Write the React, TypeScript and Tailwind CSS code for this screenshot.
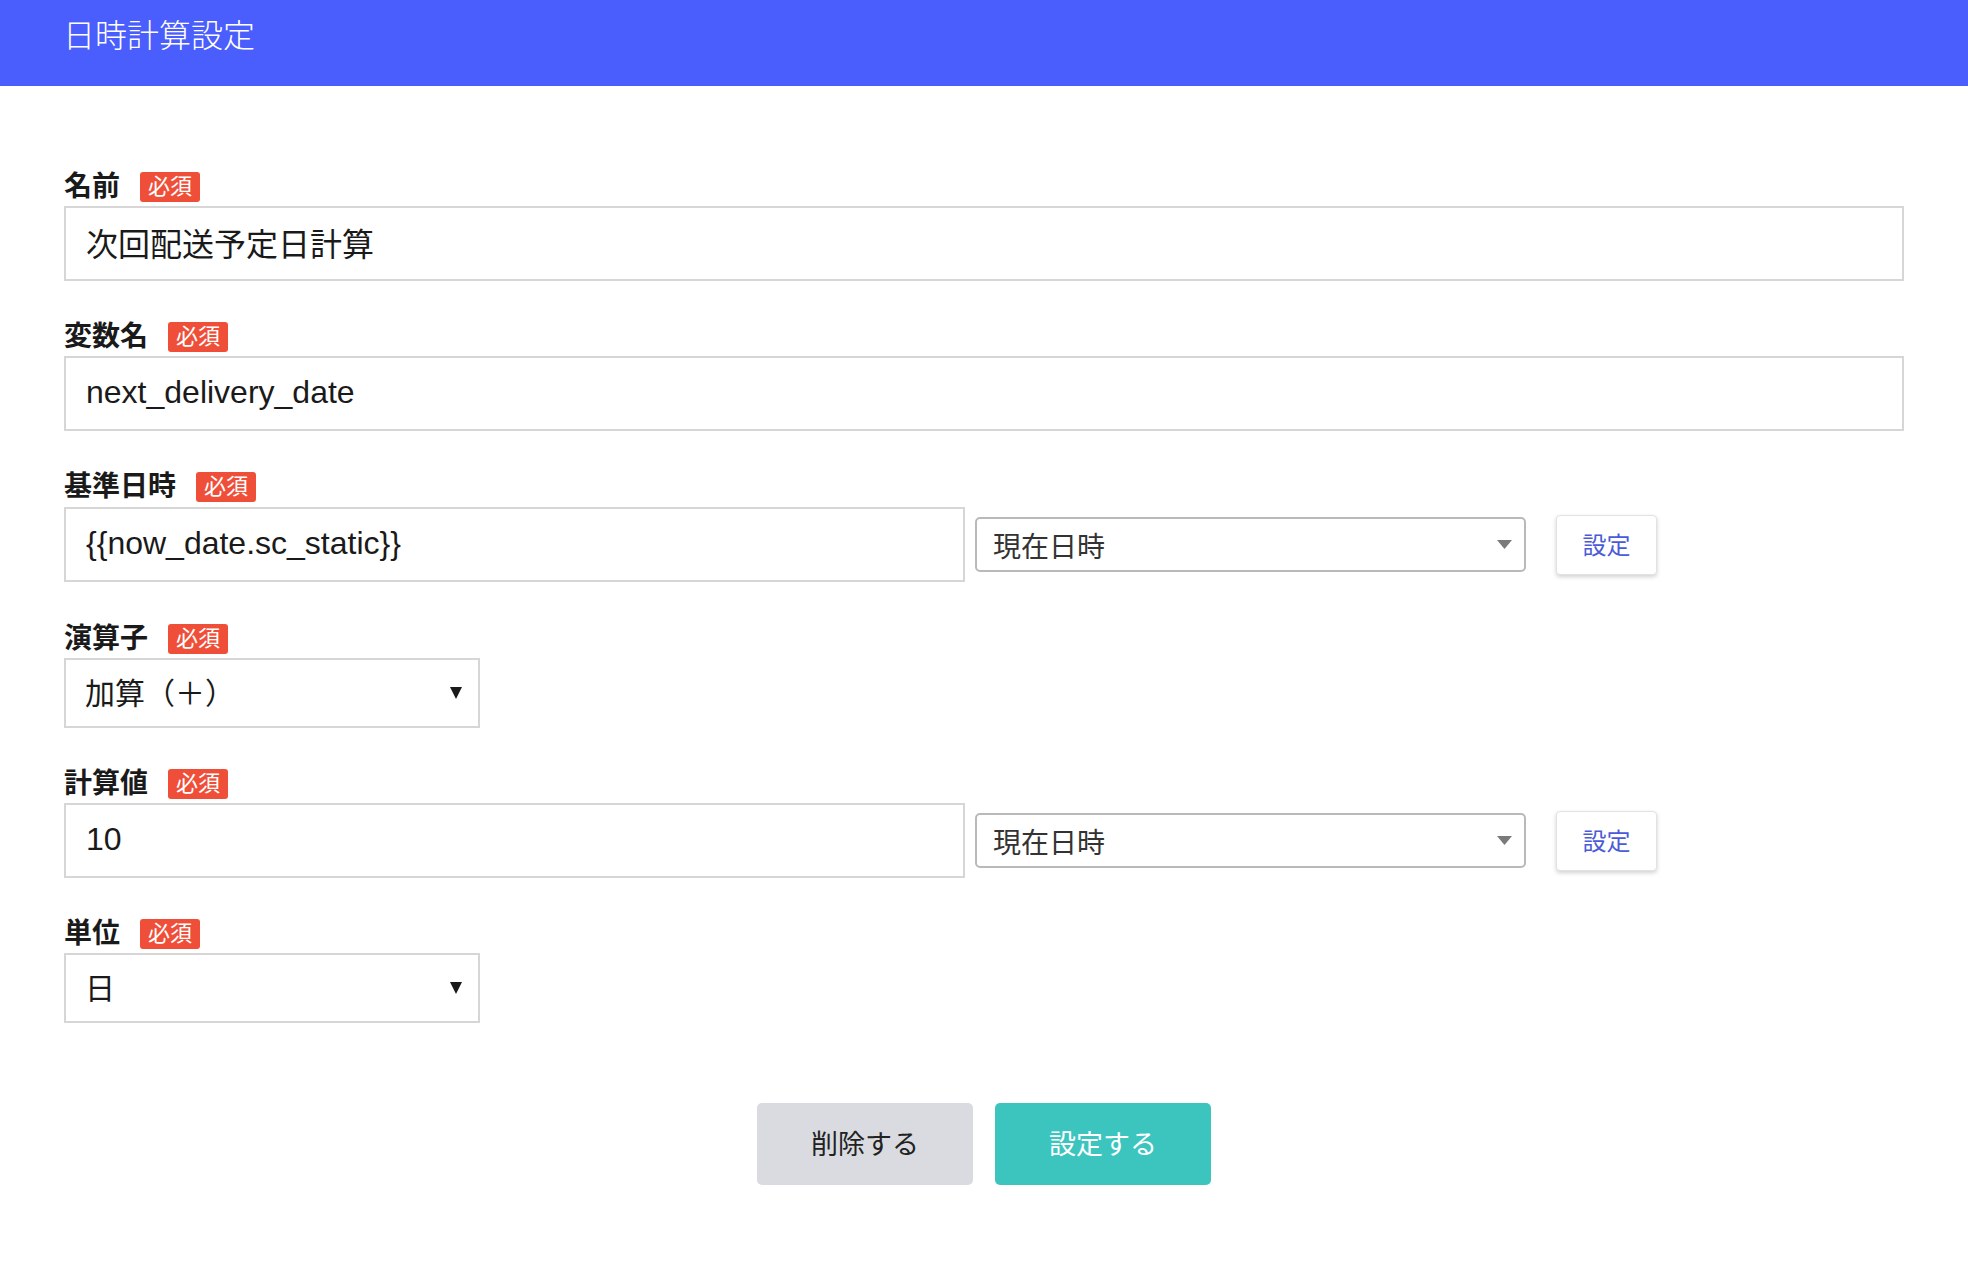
import React from 'react';

const FONT = "font-['Liberation_Sans','Noto_Sans_CJK_JP',sans-serif]";

function FieldLabel({ text }: { text: string }) {
  return (
    <div className="flex h-[30px] items-center gap-[20px]">
      <span className="text-[28px] font-bold leading-[30px] text-[#1a1a1a]">{text}</span>
      <span className="flex h-[30px] items-center rounded-[3px] bg-[#ef4f39] px-[8px] text-[22px] leading-none text-white">
        必須
      </span>
    </div>
  );
}

function TextBox({ value, wide }: { value: string; wide?: boolean }) {
  return (
    <input
      readOnly
      value={value}
      className={`h-[75px] border-2 border-[#d6d6d6] bg-white pb-[3px] pl-[20px] text-[32px] text-[#1a1a1a] outline-none ${
        wide ? 'w-full' : 'w-[901px]'
      }`}
    />
  );
}

function SourceSelect() {
  return (
    <>
      <div className="ml-[10px] flex h-[55px] w-[551px] items-center justify-between rounded-[5px] border-2 border-[#b9b9b9] bg-white pl-[16px] pr-[12px]">
        <span className="pt-[6px] text-[28px] text-[#333]">現在日時</span>
        <svg width="15" height="9" viewBox="0 0 15 9">
          <polygon points="0,0 15,0 7.5,9" fill="#7a7a7a" />
        </svg>
      </div>
      <button className="ml-[30px] flex h-[60px] w-[101px] items-center justify-center rounded-[4px] border border-[#e2e2e2] bg-white pt-[2px] text-[24px] text-[#4a5ad8] shadow-[0_2px_4px_rgba(0,0,0,0.18)]">
        設定
      </button>
    </>
  );
}

function PlainSelect({ value }: { value: string }) {
  return (
    <div className="flex h-[70px] w-[416px] items-center justify-between border-2 border-[#d6d6d6] bg-white pl-[19px] pr-[16px]">
      <span className="text-[30px] text-[#1a1a1a]">{value}</span>
      <svg width="12" height="12" viewBox="0 0 12 12">
        <polygon points="0,0 12,0 6,12" fill="#1a1a1a" />
      </svg>
    </div>
  );
}

export default function App() {
  return (
    <div className={`min-h-screen bg-white ${FONT}`}>
      {/* Header */}
      <header className="h-[86px] bg-[#4a5dfd] pl-[63px] pt-[16px]">
        <h1 className="text-[32px] font-light leading-[40px] text-white">日時計算設定</h1>
      </header>

      <main className="px-[64px] pt-[86px]">
        <div className="mb-[41px]">
          <FieldLabel text="名前" />
          <div className="mt-[4px]">
            <TextBox value="次回配送予定日計算" wide />
          </div>
        </div>

        <div className="mb-[41px]">
          <FieldLabel text="変数名" />
          <div className="mt-[4px]">
            <TextBox value="next_delivery_date" wide />
          </div>
        </div>

        <div className="mb-[42px]">
          <FieldLabel text="基準日時" />
          <div className="mt-[5px] flex items-center">
            <TextBox value="{{now_date.sc_static}}" />
            <SourceSelect />
          </div>
        </div>

        <div className="mb-[41px]">
          <FieldLabel text="演算子" />
          <div className="mt-[4px]">
            <PlainSelect value="加算（＋）" />
          </div>
        </div>

        <div className="mb-[41px]">
          <FieldLabel text="計算値" />
          <div className="mt-[4px] flex items-center">
            <TextBox value="10" />
            <SourceSelect />
          </div>
        </div>

        <div>
          <FieldLabel text="単位" />
          <div className="mt-[4px]">
            <PlainSelect value="日" />
          </div>
        </div>

        {/* Actions */}
        <div className="mt-[80px] flex justify-center gap-[22px]">
          <button className="h-[82px] w-[216px] rounded-[5px] bg-[#d9dbe1] pt-[3px] text-[27px] text-[#222]">削除する</button>
          <button className="h-[82px] w-[216px] rounded-[5px] bg-[#3cc5bf] pt-[3px] text-[27px] text-white">設定する</button>
        </div>
      </main>
    </div>
  );
}
